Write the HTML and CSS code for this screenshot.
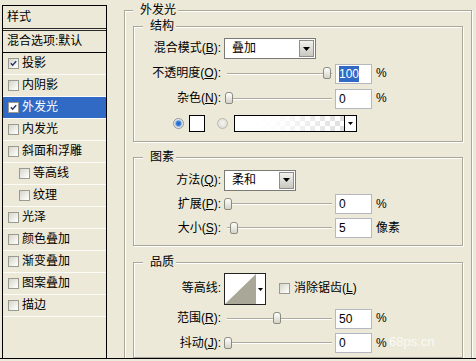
FILE: index.html
```html
<!DOCTYPE html>
<html lang="zh-CN">
<head>
<meta charset="utf-8">
<title>图层样式 - 外发光</title>
<link rel="stylesheet" href="styles.css">
</head>
<body>
<div class="main">
  <aside class="styles-list">
    <div class="list-head">样式</div>
    <div class="list-blend">混合选项:默认</div>
    <div class="item"><span class="cb"><svg viewBox="0 0 11 11"><path d="M2.2 5.2 L4.4 7.6 L8.8 2.8" /></svg></span>投影</div>
    <div class="item"><span class="cb"></span>内阴影</div>
    <div class="item selected"><span class="cb on-sel"><svg viewBox="0 0 11 11"><path d="M2.2 5.2 L4.4 7.6 L8.8 2.8" /></svg></span>外发光</div>
    <div class="item"><span class="cb"></span>内发光</div>
    <div class="item"><span class="cb"></span>斜面和浮雕</div>
    <div class="item sub"><span class="cb"></span>等高线</div>
    <div class="item sub"><span class="cb"></span>纹理</div>
    <div class="item"><span class="cb"></span>光泽</div>
    <div class="item"><span class="cb"></span>颜色叠加</div>
    <div class="item"><span class="cb"></span>渐变叠加</div>
    <div class="item"><span class="cb"></span>图案叠加</div>
    <div class="item"><span class="cb"></span>描边</div>
  </aside>

  <section class="panel">
    <fieldset class="group outer">
      <legend class="legend-outer">外发光</legend>

      <fieldset class="group inner g-struct">
        <legend class="legend-inner">结构</legend>
        <div class="row">
          <span class="lbl">混合模式(<u>B</u>):</span>
          <div class="select wide"><span class="sel-text">叠加</span><span class="drop"><svg viewBox="0 0 7 4"><path d="M0 0H7L3.5 4Z"/></svg></span></div>
        </div>
        <div class="row">
          <span class="lbl">不透明度(<u>O</u>):</span>
          <div class="slider"><span class="track"></span><span class="thumb" style="left:99px"></span></div>
          <span class="num"><span class="hl">100</span></span>
          <span class="unit">%</span>
        </div>
        <div class="row">
          <span class="lbl">杂色(<u>N</u>):</span>
          <div class="slider"><span class="track"></span><span class="thumb" style="left:1px"></span></div>
          <span class="num">0</span>
          <span class="unit">%</span>
        </div>
        <div class="row colors">
          <span class="radio on"></span>
          <span class="swatch"></span>
          <span class="radio"></span>
          <div class="gradient"><span class="grad-fill"></span><span class="grad-drop"><svg viewBox="0 0 5 3"><path d="M0 0H5L2.5 3Z"/></svg></span></div>
        </div>
      </fieldset>

      <fieldset class="group inner g-elem">
        <legend class="legend-inner">图素</legend>
        <div class="row r24">
          <span class="lbl">方法(<u>Q</u>):</span>
          <div class="select narrow"><span class="sel-text">柔和</span><span class="drop"><svg viewBox="0 0 7 4"><path d="M0 0H7L3.5 4Z"/></svg></span></div>
        </div>
        <div class="row r24">
          <span class="lbl">扩展(<u>P</u>):</span>
          <div class="slider"><span class="track"></span><span class="thumb" style="left:0px"></span></div>
          <span class="num">0</span>
          <span class="unit">%</span>
        </div>
        <div class="row r24">
          <span class="lbl">大小(<u>S</u>):</span>
          <div class="slider"><span class="track"></span><span class="thumb" style="left:6px"></span></div>
          <span class="num">5</span>
          <span class="unit">像素</span>
        </div>
      </fieldset>

      <fieldset class="group inner g-quality">
        <legend class="legend-inner">品质</legend>
        <div class="row tall">
          <span class="lbl">等高线:</span>
          <div class="contour"><svg viewBox="0 0 40 30" width="40" height="30"><rect width="40" height="30" fill="#fff"/><polygon points="0,30 31,0 31,30" fill="#a9a797"/><path d="M33 14H38L35.5 17Z" fill="#000"/></svg></div>
          <span class="cb small-gap"></span>
          <span class="cb-text">消除锯齿(<u>L</u>)</span>
        </div>
        <div class="row">
          <span class="lbl">范围(<u>R</u>):</span>
          <div class="slider"><span class="track"></span><span class="thumb" style="left:49px"></span></div>
          <span class="num">50</span>
          <span class="unit">%</span>
        </div>
        <div class="row r24">
          <span class="lbl">抖动(<u>J</u>):</span>
          <div class="slider"><span class="track"></span><span class="thumb" style="left:0px"></span></div>
          <span class="num">0</span>
          <span class="unit">%</span>
        </div>
      </fieldset>
    </fieldset>
  </section>
</div>
<div class="bottom-line"></div>
<div class="watermark">68ps.cn</div>
</body>
</html>
```

FILE: styles.css
```css
html, body {
  margin: 0;
  padding: 0;
}

body {
  width: 476px;
  height: 361px;
  overflow: hidden;
  position: relative;
  background: #ece9d8;
  color: #000;
  font-family: "Liberation Sans", "Noto Sans CJK SC", sans-serif;
  font-size: 12px;
  line-height: 15px;
}

.main {
  display: flex;
  height: 358px;
  overflow: hidden;
}

.bottom-line {
  height: 1px;
  background: #000;
}

/* ---------- left style list ---------- */
.styles-list {
  flex: none;
  width: 103px;
  margin: 5px 0 0 2px;
  border: 1px solid #000;
  border-bottom: none;
}

.list-head {
  height: 22px;
  line-height: 22px;
  padding-left: 4px;
  border-bottom: 3px double #2a2a2a;
}

.list-blend {
  height: 21px;
  line-height: 21px;
  padding-left: 4px;
  border-bottom: 1px solid #000;
}

.item {
  height: 21px;
  display: flex;
  align-items: center;
  gap: 3px;
  padding-left: 5px;
  border-bottom: 1px solid #fbfbf7;
}

.item.sub {
  padding-left: 16px;
}

.item.selected {
  background: #316ac5;
  color: #fff;
}

.cb {
  flex: none;
  box-sizing: border-box;
  width: 11px;
  height: 11px;
  border: 1px solid #9a9a90;
  background: linear-gradient(135deg, #d6d5cb 0%, #f4f4f0 70%, #fff 100%);
  display: flex;
}

.cb.on-sel {
  background: #fff;
}

.cb svg {
  width: 9px;
  height: 9px;
}

.cb svg path {
  fill: none;
  stroke: #24346c;
  stroke-width: 1.7;
}

/* ---------- right panel ---------- */
.panel {
  flex: 1;
  margin-left: 17px;
  min-width: 0;
}

.group {
  margin: 0;
  border: 1px solid #aca899;
  box-shadow: inset 1px 1px 0 #fff, 1px 1px 0 #fff;
  min-width: 0;
}

.group legend {
  height: 15px;
  line-height: 15px;
  background: #ece9d8;
  padding: 0 2px 0 7px;
}

.outer {
  width: 348px;
  box-sizing: border-box;
  margin-top: 3px;
  padding: 1px 8px 30px 8px;
}

.legend-outer {
  margin-left: 0;
}

.legend-inner {
  margin-left: 9px;
}

.inner {
  padding: 0;
}

.g-struct {
  padding: 2px 0 5px 0;
}

.g-elem {
  margin-top: 8px;
  padding: 3px 0 5px 0;
}

.g-quality {
  margin-top: 9px;
  padding: 1px 0 2px 0;
}

.row {
  display: flex;
  align-items: center;
  height: 25px;
}

.row.r24 {
  height: 24px;
}

.row.tall {
  height: 35px;
}

.lbl {
  flex: none;
  width: 87px;
  text-align: right;
  white-space: nowrap;
}

/* select */
.select {
  flex: none;
  box-sizing: border-box;
  height: 21px;
  margin-left: 3px;
  display: flex;
  align-items: center;
  padding-left: 7px;
  border: 1px solid #7b7b75;
  background: #fff;
}

.select.wide {
  width: 92px;
}

.select.narrow {
  width: 72px;
}

.drop {
  box-sizing: border-box;
  margin-left: auto;
  margin-right: 1px;
  width: 15px;
  height: 17px;
  border: 1px solid #8f8f88;
  background: linear-gradient(#f2f2ee, #c9c8c0);
  display: flex;
  align-items: center;
  justify-content: center;
}

.drop svg {
  width: 7px;
  height: 4px;
}

/* slider */
.slider {
  position: relative;
  flex: none;
  width: 108px;
  height: 13px;
  margin-left: 3px;
  display: flex;
  align-items: center;
}

.track {
  flex: 1;
  margin-left: 3px;
  height: 0;
  border-top: 1px solid #aeab9e;
  border-bottom: 1px solid #fff;
}

.thumb {
  position: absolute;
  top: 0;
  box-sizing: border-box;
  width: 8px;
  height: 12px;
  border: 1px solid #8b8b80;
  border-radius: 3px 3px 2px 2px;
  background: linear-gradient(#ffffff, #d4d2c8);
}

/* numeric field */
.num {
  flex: none;
  box-sizing: border-box;
  width: 37px;
  height: 20px;
  margin-left: 3px;
  padding: 0 3px;
  border: 1px solid #b5b8c0;
  background: #fff;
  line-height: 18px;
  font-size: 12px;
}

.hl {
  background: #316ac5;
  color: #fff;
  padding: 1px 0;
}

.unit {
  margin-left: 4px;
}

/* colour row */
.row.colors {
  padding-left: 39px;
}

.radio {
  flex: none;
  box-sizing: border-box;
  width: 11px;
  height: 11px;
  border-radius: 50%;
  border: 1px solid #b9b9b0;
  background: radial-gradient(circle at 50% 45%, #f6f6f2 0, #d6d5cc 100%);
}

.radio.on {
  border-color: #8c98a8;
  background: radial-gradient(circle at 50% 50%, #1f5fb9 0, #3b82d8 2.2px, #9ec2ec 3.2px, #e8e8e2 4px);
}

.swatch {
  flex: none;
  box-sizing: border-box;
  width: 16px;
  height: 17px;
  margin-left: 5px;
  border: 1px solid #000;
  background: #fff;
}

.row.colors .radio:not(.on) {
  margin-left: 12px;
}

.gradient {
  flex: none;
  box-sizing: border-box;
  width: 123px;
  height: 17px;
  margin-left: 6px;
  border: 1px solid #000;
  display: flex;
}

.grad-fill {
  flex: 1;
  background:
    linear-gradient(to right, #fff 0%, rgba(255, 255, 255, 0.95) 35%, rgba(255, 255, 255, 0) 100%),
    repeating-conic-gradient(#dedede 0 25%, #fff 0 50%) 0 0 / 10px 10px;
}

.grad-drop {
  flex: none;
  width: 11px;
  border-left: 1px solid #000;
  background: #fff;
  display: flex;
  align-items: center;
  justify-content: center;
}

.grad-drop svg {
  width: 5px;
  height: 3px;
}

/* contour */
.contour {
  flex: none;
  margin-left: 3px;
  border: 1px solid #222;
  width: 40px;
  height: 30px;
  display: flex;
}

.small-gap {
  margin-left: 13px;
}

.cb-text {
  margin-left: 4px;
}

.watermark {
  position: absolute;
  left: 389px;
  top: 334px;
  font-size: 13px;
  color: rgba(255, 255, 255, 0.75);
}
```
